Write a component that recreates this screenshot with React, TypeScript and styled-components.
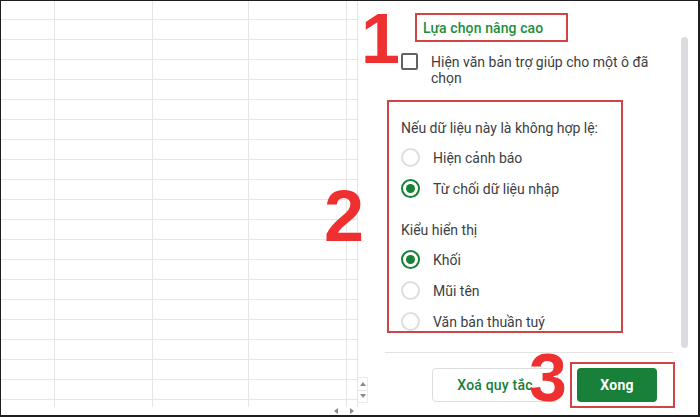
import React from "react";
import styled, { createGlobalStyle } from "styled-components";

const GlobalStyle = createGlobalStyle`
  html, body { margin: 0; padding: 0; background: #fff; }
  body { font-family: Roboto, "Noto Sans", Arial, sans-serif; color: #3c4043; }
  * { box-sizing: border-box; }
`;

const RED = "#cf4444";
const GREEN = "#188038";

const Frame = styled.div`
  position: relative;
  width: 700px;
  height: 417px;
  border-style: solid;
  border-color: #1e1e1e;
  border-width: 1px 2px 2px 1px;
  display: flex;
  background: #fff;
`;

/* ---------- spreadsheet ---------- */
const Sheet = styled.div`
  width: 367px;
  display: flex;
  flex-direction: column;
  overflow: hidden;
`;

const SheetBody = styled.div`
  flex: 1;
  display: flex;
  min-height: 0;
`;

const Grid = styled.div`
  width: 357px;
  margin-top: -1px;
  display: grid;
  grid-template-columns: 54px 98px 96px 98px 11px;
  grid-auto-rows: 20px;
  align-content: start;
  overflow: hidden;
  border-right: 1px solid #e3e3e3;
`;

const Cell = styled.div`
  border-right: 1px solid #e6e6e6;
  border-bottom: 1px solid #e6e6e6;
`;

const VScroll = styled.div`
  width: 10px;
  display: flex;
  flex-direction: column;
  justify-content: flex-end;
  padding-bottom: 4px;
`;

const VBox = styled.div`
  height: 26px;
  border: 1px solid #ececec;
  border-left: none;
  display: flex;
  flex-direction: column;
`;

const ArrowCell = styled.div`
  flex: 1;
  display: flex;
  align-items: center;
  justify-content: center;
`;

const HArrowCell = styled.div`
  flex: none;
  width: 16px;
  display: flex;
  align-items: center;
  justify-content: center;
`;

const VDivider = styled.div`
  height: 1px;
  background: #e6e6e6;
`;

const HScroll = styled.div`
  height: 8px;
  display: flex;
  justify-content: flex-end;
  padding-right: 8px;
`;

const Tri = ({ dir }: { dir: "up" | "down" | "left" | "right" }) => {
  const pts: Record<string, string> = {
    up: "0,4 3,0 6,4",
    down: "0,0 6,0 3,4",
    left: "4,0 4,6 0,3",
    right: "0,0 4,3 0,6",
  };
  const vertical = dir === "up" || dir === "down";
  return (
    <svg width={vertical ? 6 : 4} height={vertical ? 4 : 6} viewBox={vertical ? "0 0 6 4" : "0 0 4 6"}>
      <polygon points={pts[dir]} fill="#8a8a8a" />
    </svg>
  );
};

/* ---------- side panel ---------- */
const Panel = styled.div`
  flex: 1;
  display: flex;
  flex-direction: column;
  background: #fff;
`;

const ScrollArea = styled.div`
  height: 351px;
  display: flex;
  overflow: hidden;
`;

const Content = styled.div`
  flex: 1;
  padding: 12px 0 0 19px;
  display: flex;
  flex-direction: column;
  align-items: flex-start;
`;

const AnnotBox = styled.div`
  border: 2px solid ${RED};
`;

const TitleBox = styled(AnnotBox)`
  margin-left: 28px;
  width: 153px;
  height: 29px;
  padding-left: 6px;
  display: flex;
  align-items: center;
`;

const Title = styled.span`
  color: #1e8e3e;
  font-size: 14px;
  font-weight: 500;
  letter-spacing: 0.1px;
`;

const CheckRow = styled.div`
  margin: 11px 0 0 14px;
  display: flex;
  align-items: flex-start;
  gap: 13px;
`;

const Checkbox = styled.div`
  width: 17px;
  height: 17px;
  border: 2px solid #5f6368;
  border-radius: 2px;
  flex: none;
`;

const Label = styled.span`
  font-size: 14px;
  line-height: 16px;
  margin-top: 1px;
  width: 222px;
  color: #3c4043;
`;

const OptionsBox = styled(AnnotBox)`
  margin-top: 14px;
  width: 236px;
  height: 233px;
  padding: 16px 0 0 12px;
  overflow: hidden;
`;

const Heading = styled.div<{ $gap?: number }>`
  font-size: 14px;
  line-height: 20px;
  margin-top: ${(p) => p.$gap ?? 0}px;
  margin-bottom: 4px;
  color: #3c4043;
`;

const RadioRow = styled.div`
  height: 31px;
  display: flex;
  align-items: center;
  gap: 13px;
  font-size: 14px;
  color: #3c4043;
`;

const Radio = styled.div<{ $on?: boolean }>`
  width: 19px;
  height: 19px;
  border-radius: 50%;
  border: 2px solid ${(p) => (p.$on ? GREEN : "#dcdfe2")};
  display: flex;
  align-items: center;
  justify-content: center;
  flex: none;
  &::after {
    content: "";
    display: ${(p) => (p.$on ? "block" : "none")};
    width: 9px;
    height: 9px;
    border-radius: 50%;
    background: ${GREEN};
  }
`;

const ScrollTrack = styled.div`
  width: 7px;
  margin-right: 10px;
  padding: 36px 0 4px;
  display: flex;
`;

const Thumb = styled.div`
  flex: 1;
  background: #dadce0;
  border-radius: 4px;
`;

const Separator = styled.div`
  height: 1px;
  background: #e3e3e3;
  margin: 0 25px 0 17px;
`;

const Footer = styled.div`
  flex: 1;
  display: flex;
  justify-content: flex-end;
  align-items: flex-start;
  padding: 9px 23px 0 0;
`;

const ButtonBase = styled.button`
  height: 34px;
  border-radius: 4px;
  font-family: Roboto, "Noto Sans", Arial, sans-serif;
  font-size: 14px;
  font-weight: 500;
  letter-spacing: 0.2px;
  cursor: pointer;
  padding: 0;
`;

const SecondaryButton = styled(ButtonBase)`
  width: 126px;
  margin: 6px 12px 0 0;
  background: #fff;
  color: ${GREEN};
  border: 1px solid #dadce0;
`;

const PrimaryWrap = styled(AnnotBox)`
  padding: 4px 16px 4px 5px;
`;

const PrimaryButton = styled(ButtonBase)`
  width: 80px;
  background: ${GREEN};
  color: #fff;
  border: none;
  font-weight: 700;
`;

/* ---------- annotation numerals ---------- */
const Numeral = styled.div<{ $x: number; $y: number; $size: number }>`
  position: absolute;
  left: ${(p) => p.$x}px;
  top: ${(p) => p.$y}px;
  font-family: "Liberation Sans", Arial, sans-serif;
  font-weight: 700;
  font-size: ${(p) => p.$size}px;
  line-height: 0.75;
  color: #ee3030;
  pointer-events: none;
`;

const ROWS = 21;
const COLS = 5;

export default function App() {
  const cells = [];
  for (let i = 0; i < ROWS * COLS; i++) cells.push(<Cell key={i} />);

  return (
    <>
      <GlobalStyle />
      <Frame>
        <Sheet>
          <SheetBody>
            <Grid>{cells}</Grid>
            <VScroll>
              <VBox>
                <ArrowCell>
                  <Tri dir="up" />
                </ArrowCell>
                <VDivider />
                <ArrowCell>
                  <Tri dir="down" />
                </ArrowCell>
              </VBox>
            </VScroll>
          </SheetBody>
          <HScroll>
            <HArrowCell>
              <Tri dir="left" />
            </HArrowCell>
            <HArrowCell>
              <Tri dir="right" />
            </HArrowCell>
          </HScroll>
        </Sheet>

        <Panel>
          <ScrollArea>
            <Content>
              <TitleBox>
                <Title>Lựa chọn nâng cao</Title>
              </TitleBox>
              <CheckRow>
                <Checkbox />
                <Label>Hiện văn bản trợ giúp cho một ô đã chọn</Label>
              </CheckRow>
              <OptionsBox>
                <Heading>Nếu dữ liệu này là không hợp lệ:</Heading>
                <RadioRow>
                  <Radio />
                  Hiện cảnh báo
                </RadioRow>
                <RadioRow>
                  <Radio $on />
                  Từ chối dữ liệu nhập
                </RadioRow>
                <Heading $gap={16}>Kiểu hiển thị</Heading>
                <RadioRow>
                  <Radio $on />
                  Khối
                </RadioRow>
                <RadioRow>
                  <Radio />
                  Mũi tên
                </RadioRow>
                <RadioRow>
                  <Radio />
                  Văn bản thuần tuý
                </RadioRow>
              </OptionsBox>
            </Content>
            <ScrollTrack>
              <Thumb />
            </ScrollTrack>
          </ScrollArea>
          <Separator />
          <Footer>
            <SecondaryButton>Xoá quy tắc</SecondaryButton>
            <PrimaryWrap>
              <PrimaryButton>Xong</PrimaryButton>
            </PrimaryWrap>
          </Footer>
        </Panel>

        <Numeral $x={360} $y={12} $size={70}>1</Numeral>
        <Numeral $x={323} $y={188} $size={72}>2</Numeral>
        <Numeral $x={528} $y={351} $size={68}>3</Numeral>
      </Frame>
    </>
  );
}
